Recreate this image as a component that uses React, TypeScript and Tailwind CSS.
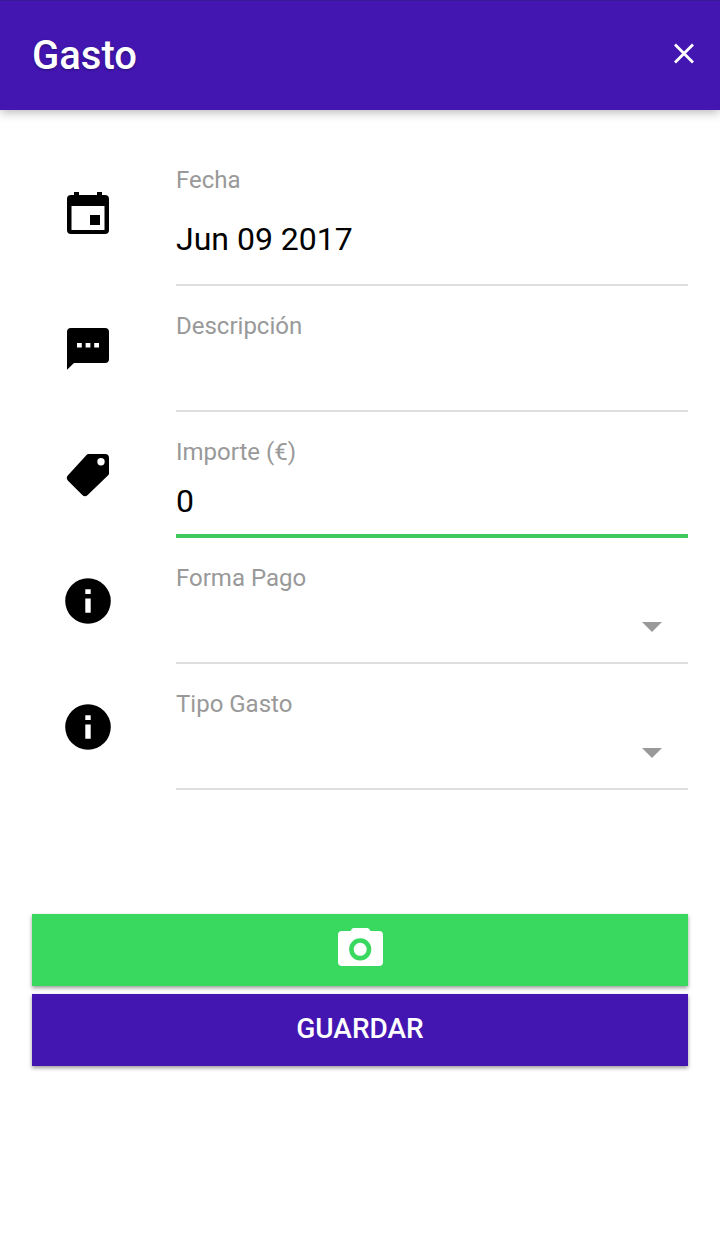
import React, { useState } from 'react';

type IconName = 'calendar' | 'message' | 'tag' | 'info';

interface Field {
  id: string;
  label: string;
  icon: IconName;
  select?: boolean;
}

const FIELDS: Field[] = [
  { id: 'descripcion', label: 'Descripción', icon: 'message' },
  { id: 'importe', label: 'Importe (€)', icon: 'tag' },
  { id: 'formaPago', label: 'Forma Pago', icon: 'info', select: true },
  { id: 'tipoGasto', label: 'Tipo Gasto', icon: 'info', select: true },
];

function FieldIcon({ name }: { name: IconName }) {
  return (
    <svg viewBox="0 0 48 48" className="h-12 w-12 shrink-0" fill="black">
      {name === 'calendar' && (
        <path
          fillRule="evenodd"
          d="M10 3h5v3h18V3h5v3h3a4 4 0 0 1 4 4v31a4 4 0 0 1-4 4H7a4 4 0 0 1-4-4V10a4 4 0 0 1 4-4h3zM7.500 17v24h33V17zM26 26h10v10H26z"
        />
      )}
      {name === 'message' && (
        <path
          fillRule="evenodd"
          d="M7 3h34a4 4 0 0 1 4 4v27a4 4 0 0 1-4 4H10L3 44.800V7a4 4 0 0 1 4-4zM13 18v4.600h4.800V18zM21.600 18v4.600h4.800V18zM30.200 18v4.600H35V18z"
        />
      )}
      {name === 'tag' && (
        <path
          fillRule="evenodd"
          d="M24.300 3H41a4 4 0 0 1 4 4v15.500a2 2 0 0 1-.6 1.400L23.700 44a4 4 0 0 1-5.400 0L4 29.700a4 4 0 0 1 0-5.400L23 3.600a2 2 0 0 1 1.300-.6zM37 7a3.700 3.700 0 1 0 0 7.400A3.700 3.700 0 0 0 37 7z"
        />
      )}
      {name === 'info' && (
        <path
          fillRule="evenodd"
          d="M24 1.200a22.800 22.800 0 1 0 0 45.600 22.800 22.800 0 0 0 0-45.600zM21.300 12.300v4.700h5.400v-4.700zM21.300 21.500v14.200h5.400V21.500z"
        />
      )}
    </svg>
  );
}

export default function App() {
  const [values, setValues] = useState<Record<string, string>>({ importe: '0' });
  const [active, setActive] = useState('importe');

  return (
    <div className="min-h-[1234px] bg-white font-['Roboto',sans-serif] text-black">
      {/* Header */}
      <header className="flex h-[110px] items-center justify-between border-t border-[#3a1a94] bg-[#4316b2] pr-6 pl-8 shadow-[0_2px_10px_rgba(0,0,0,0.3)]">
        <h1 className="text-[40px] leading-[48px] font-medium text-white [text-shadow:0_1px_3px_rgba(0,0,0,0.35)]">Gasto</h1>
        <button aria-label="Cerrar" className="-mt-1">
          <svg viewBox="0 0 24 24" className="h-6 w-6" fill="none" stroke="white" strokeWidth="2.8">
            <path d="M3 2.500l18 18M21 2.500L3 20.500" />
          </svg>
        </button>
      </header>

      {/* Form */}
      <main className="pt-8">
        <div className="flex h-36 items-center pr-8 pl-16">
          <span className="-mt-0.5">
            <FieldIcon name="calendar" />
          </span>
          <div className="ml-16 flex h-full flex-1 flex-col border-b-2 border-[#dedede] pt-6">
            <span className="text-2xl leading-7 text-[#999]">Fecha</span>
            <span className="mt-[26px] text-[32px] leading-[38px]">Jun 09 2017</span>
          </div>
        </div>

        {FIELDS.map(field => (
          <div key={field.id} className="flex h-[126px] items-center pr-8 pl-16">
            <FieldIcon name={field.icon} />
            <div
              className={`ml-16 flex h-full flex-1 flex-col pt-[26px] ${
                active === field.id ? 'border-b-4 border-[#41c75c]' : 'border-b-2 border-[#dedede]'
              }`}
            >
              <label htmlFor={field.id} className="text-2xl leading-7 text-[#999]">{field.label}</label>
              {field.select ? (
                <button id={field.id} className="mt-4 flex h-[38px] items-center justify-end pr-[26px]">
                  <svg viewBox="0 0 20 10" className="h-2.5 w-5" fill="#999">
                    <path d="M0 0h20L10 10z" />
                  </svg>
                </button>
              ) : (
                <input
                  id={field.id}
                  value={values[field.id] || ''}
                  onFocus={() => setActive(field.id)}
                  onChange={e => setValues({ ...values, [field.id]: e.target.value })}
                  className="mt-4 h-[38px] w-full text-[32px] leading-[38px] outline-none"
                />
              )}
            </div>
          </div>
        ))}
      </main>

      {/* Actions */}
      <div className="mt-[124px] flex flex-col gap-2 px-8">
        <button
          aria-label="Foto"
          className="flex h-[72px] items-center justify-center bg-[#39d960] shadow-[0_2px_4px_rgba(0,0,0,0.4)]"
        >
          <svg viewBox="0 0 48 48" className="h-12 w-12">
            <path
              fill="white"
              d="M18 2h13c1 0 2 .5 2.500 1.500L34.500 5H43a4 4 0 0 1 4 4v27a4 4 0 0 1-4 4H6a4 4 0 0 1-4-4V9a4 4 0 0 1 4-4h8.500l1-1.500C16 2.500 17 2 18 2z"
            />
            <circle cx="24.200" cy="23.300" r="8.800" fill="none" stroke="#39d960" strokeWidth="4.600" />
          </svg>
        </button>
        <button className="flex h-[72px] items-center justify-center bg-[#4316b2] pb-0.5 text-[28px] font-medium text-white shadow-[0_2px_4px_rgba(0,0,0,0.4)]">
          GUARDAR
        </button>
      </div>
    </div>
  );
}
